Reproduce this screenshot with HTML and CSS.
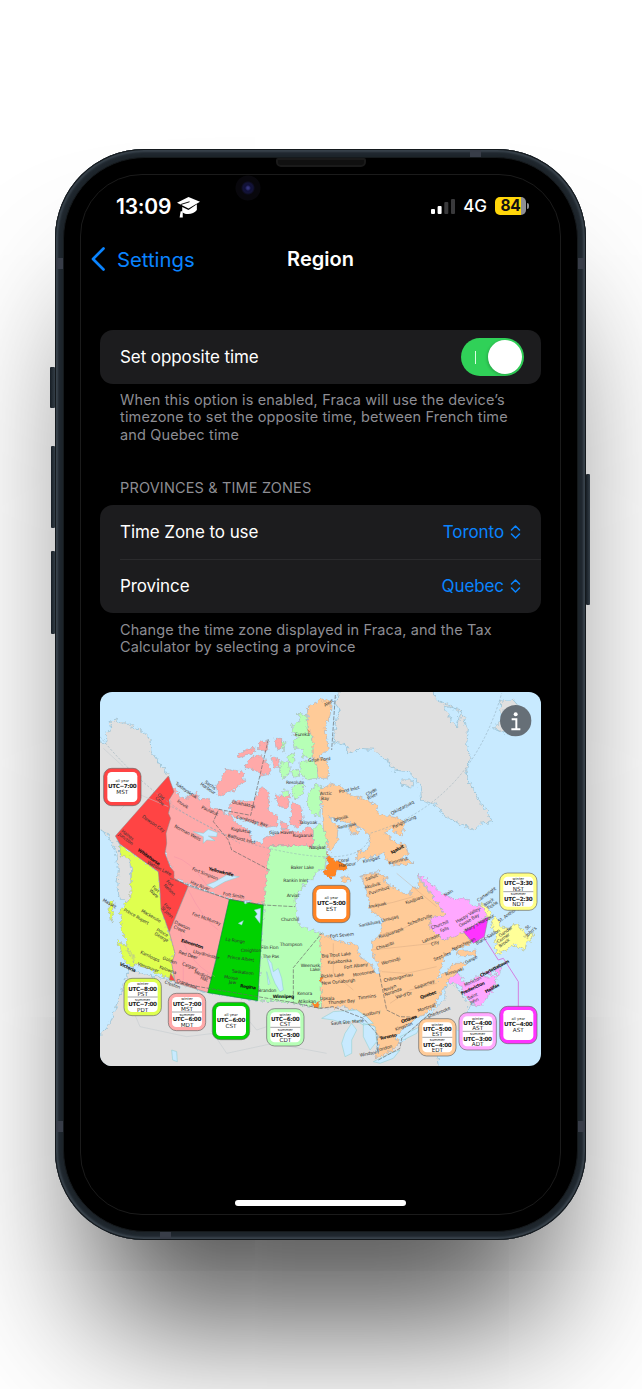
FILE: index.html
```html
<!DOCTYPE html>
<html lang="en">
<head>
<meta charset="utf-8">
<meta name="viewport" content="width=device-width, initial-scale=1">
<title>Region</title>
<link rel="stylesheet" href="styles.css">
</head>
<body>
<div class="phone">
  <i class="key key-mute"></i><i class="key key-up"></i><i class="key key-down"></i><i class="key key-power"></i>
  <i class="band band-tl"></i><i class="band band-tr"></i><i class="band band-bl"></i><i class="band band-br"></i><i class="band band-top"></i><i class="band band-bottom"></i>
  <div class="bezel">
    <i class="speaker"></i>
    <i class="camera"></i>
    <main class="screen">
      <header class="status">
        <span class="clock">13:09</span>
        <svg class="cap" viewBox="0 0 22 20"><path d="M0 5.500 11 0l11 4.500-11 6.500Z" fill="#fff"/><path d="M5 9.500v5c4 3 11 2 14-2V7l-8 5.500Z" fill="#fff"/><path d="M12 4.500 4 7V18" fill="none" stroke="#000" stroke-width=".9"/><path d="M3.500 13.500h2v6h-3Z" fill="#fff"/></svg>
        <span class="spacer"></span>
        <svg class="signal" viewBox="0 0 24 16"><rect y="11" width="4" height="5" rx="1" fill="#fff"/><rect x="6.600" y="8" width="4" height="8" rx="1" fill="#fff"/><rect x="13.300" y="4" width="4" height="12" rx="1" fill="#39393b"/><rect x="20" y="1" width="4" height="15" rx="1" fill="#39393b"/></svg>
        <span class="network">4G</span>
        <span class="battery">84</span><i class="nub"></i>
      </header>
      <nav class="nav">
        <a class="back"><svg viewBox="0 0 14 24"><path d="M12.500 1.500 2 12l10.500 10.500" fill="none" stroke="#0a84ff" stroke-width="2.700" stroke-linecap="round" stroke-linejoin="round"/></svg><span>Settings</span></a>
        <h1>Region</h1>
      </nav>
      <section class="card opposite">
        <div class="row"><span class="name">Set opposite time</span><span class="toggle"><i class="tick"></i><i class="knob"></i></span></div>
      </section>
      <p class="note">When this option is enabled, Fraca will use the device’s<br>timezone to set the opposite time, between French time<br>and Quebec time</p>
      <h2>PROVINCES &amp; TIME ZONES</h2>
      <section class="card">
        <div class="row"><span class="name">Time Zone to use</span><span class="value">Toronto</span><svg class="chev" viewBox="0 0 10 14"><path d="M1 5l4-4 4 4M1 9l4 4 4-4"/></svg></div>
        <div class="row ruled"><span class="name">Province</span><span class="value">Quebec</span><svg class="chev" viewBox="0 0 10 14"><path d="M1 5l4-4 4 4M1 9l4 4 4-4"/></svg></div>
      </section>
      <p class="note note-province">Change the time zone displayed in Fraca, and the Tax<br>Calculator by selecting a province</p>
      <svg class="map" viewBox="0 6 1323 1122">
        <defs><filter id="coast" x="-5%" y="-5%" width="110%" height="110%"><feTurbulence type="fractalNoise" baseFrequency=".09" numOctaves="2" seed="4"/><feDisplacementMap in="SourceGraphic" scale="20" xChannelSelector="R" yChannelSelector="G"/></filter></defs>
        <rect width="1323" height="1130" fill="#c8eaff"/>
        <g filter="url(#coast)" stroke="#8dbace" stroke-width="2" fill="#e0e0e0">
          <path d="M-15 135 12 165 22 152 15 130 35 115 30 95 45 88 60 98 85 100 100 112 118 118 135 130 150 150 153 185 175 215 190 235 210 262 50 445 60 462 58 490 90 500 95 620 85 640 60 625 50 590 55 540 45 480 20 430-15 415Z"/>
          <path d="M85 840 210 870 325 908 473 932 580 938 665 955 720 945 790 980 830 1010 830 1090 900 1060 980 980 1035 925 1035 890 1065 880 1090 925 1115 945 1095 970 1080 1020 1010 1060 1020 1150H-15V1050L30 1000 70 890Z"/>
          <path d="M725-10 705 40 720 60 710 90 700 155 740 165 740 195 780 175 820 178 850 205 870 215 880 240 925 245 945 265 960 285 965 330 1010 345 1030 375 1085 405 1120 420 1140 400 1178 395 1160 365 1140 340 1120 300 1105 270 1100 240 1110 200 1100 165 1105 120 1085 70 1050 45 1010 30 990-10ZM905 270 940 270 935 292 905 285ZM1030 45 1085 60 1070 110 1050 85ZM1200 30 1240 30 1265 60 1260 120 1215 130 1180 115 1205 90Z"/>
        </g>
        <g filter="url(#coast)" stroke="#a3a7b0" stroke-width="1.500">
          <g fill="#ffa9a9">
            <path d="M348 290 372 250 378 235 425 245 435 275 400 300 355 318ZM410 195 440 178 465 175 460 192 420 202ZM478 160 505 152 503 180 475 182ZM450 205 475 195 505 215 512 252 485 258 465 240 435 232ZM525 145 545 145 548 170 532 178ZM388 345 400 330 450 335 470 320 475 298 490 290 508 310 505 360 535 380 530 408 500 412 440 392 390 375ZM525 315 570 315 567 345 555 358 535 345ZM575 335 605 350 610 385 592 415 570 398ZM512 200 535 205 540 230 520 235ZM540 395 565 402 560 420 545 418Z"/>
            <path d="M217 290 240 320 260 325 290 305 300 330 325 325 330 350 358 360 390 375 405 395 450 425 455 455 490 460 495 440 535 432 555 415 600 430 620 410 641 415V468H510L497 645 388 628 222 565 190 460Z"/>
          </g>
          <g fill="#b6ffb6">
            <path d="M620 75 595 70 600 95 580 100 575 130 600 140 580 155 585 175 610 175 605 200 640 205V150L625 115ZM600 215 650 210 650 265 615 270 600 245ZM545 215 565 220 570 250 550 265 538 240ZM545 155 555 155 552 190ZM563 195 580 190 582 220 565 215ZM572 240 592 235 600 258 580 262ZM580 285 610 280 612 310 585 330 575 305ZM548 300 565 300 565 320 550 320ZM625 310 645 285 665 290 660 380 640 375 622 345ZM640 420 660 400 682 440 672 520 640 500Z"/>
            <path d="M510 467 682 470 675 535 650 545 640 565 612 585 585 630 590 680 600 705 625 718 665 728 675 810 665 955 580 938 473 932 490 645Z"/>
          </g>
          <g fill="#ffcb98">
            <path d="M622 50 660 30 695 30 690 80 675 110 685 180 660 200 685 215 685 265 655 265 640 200 638 140 625 120Z"/>
            <path d="M665 340 660 300 695 280 725 290 740 310 790 325 830 345 835 370 895 385 915 395 905 440 870 415 855 430 890 460 915 460 925 490 905 500 940 520 910 525 865 520 850 490 770 510 775 485 805 480 810 440 780 410 720 390 685 380 715 410 710 460 690 485 675 430ZM750 405 775 410 770 435 750 430ZM785 555 830 545 865 565 840 580ZM725 560 745 555 750 570 730 580Z"/>
            <path d="M660 730 720 755 770 762 780 800 815 825 825 848 840 850 838 830 825 810 815 780 815 755 840 735 850 690 810 660 805 620 785 560 815 550 840 550 860 580 910 610 930 615 935 590 960 595 952 555 1035 675 990 685 990 715 1030 750 1090 725 1120 760 1060 780 1035 800 1010 870 1035 850 1060 820 1100 820 1040 880 1000 950 980 970 950 985 910 1015 885 1040 900 1060 870 1085 825 1105 835 1080 835 1040 820 1010 780 990 765 960 730 950 665 955ZM1070 785 1130 780 1125 795 1075 798Z"/>
          </g>
          <path fill="#ffff98" stroke="#a4aa80" d="M1145 640 1175 670 1165 690 1140 655ZM1180 680 1192 680 1200 710 1225 715 1250 700 1265 720 1285 735 1275 780 1240 765 1220 780 1190 795 1185 760 1190 730 1175 710ZM1275 740 1300 725 1290 755Z"/>
          <path fill="#ffa8ff" d="M952 550 990 580 1025 610 1070 630 1100 625 1120 650 1145 645 1163 680 1090 725 1060 740 1030 750 990 715 990 685 1035 675ZM1045 865 1075 850 1095 880 1120 870 1140 855 1165 865 1190 855 1180 900 1155 930 1140 950 1115 940 1090 910 1085 885 1050 880ZM1145 850 1170 840 1175 855ZM1180 840 1205 830 1195 860Z"/>
          <path fill="#dfff50" d="M60 462 175 545 180 600 195 690 215 750 225 790 215 820 222 872 105 820 85 785 80 750 62 720 65 690 60 660 92 625 95 530 90 505 60 497ZM50 748 75 765 100 800 108 830 85 825 65 795ZM28 635 42 635 40 670 32 697 27 665Z"/>
          <path fill="#ff8424" d="M680 488 700 510 725 515 745 540 710 540 705 560 690 565 672 550 682 520ZM660 860 670 860 665 885ZM635 945 660 932 655 958ZM622 118 630 118 628 135Z"/>
        </g>
        <g stroke="#888" stroke-width="1.500">
          <path fill="#ff4444" d="M205 258 222 305 207 330 210 350 205 370 212 385 198 430 200 460 195 490 210 530 222 545V565L265 588 208 727 195 690 183 660 180 600 175 545 60 462 46 438ZM212 850 225 872 208 870Z"/>
          <path fill="#ffa9a9" d="M265 588 388 628 325 908 226 878 215 820 225 790 208 727Z"/>
          <path fill="#00d200" stroke="#174" d="M388 628 490 645 473 932 323 908 348 810 350 795Z"/>
          <path fill="#ff33ff" d="M1090 725 1165 680 1153 740 1120 760Z"/>
        </g>
        <g fill="#c8eaff" stroke="#8cc" stroke-width="1.500">
          <path d="M280 425 310 430 325 418 352 428 350 440 325 438 345 452 320 450 310 460 310 440ZM320 585 345 575 380 555 418 560 375 575 340 595ZM463 660 482 655 480 700 465 680 472 672ZM430 632 455 632 435 642ZM415 700 430 692 425 705ZM500 800 515 820 520 845 535 835 545 865 550 900 540 905 525 880 515 855ZM500 845 510 880 505 885ZM665 985 700 965 770 960 800 980 820 1000 790 1005 765 990 730 1000 700 990ZM735 1030 755 1000 770 1020 755 1050 755 1090 735 1100 725 1060ZM790 1000 825 1010 830 1055 810 1080 790 1040ZM215 1080 230 1085 232 1115 218 1110ZM820 1115 870 1090 900 1080 880 1105 840 1120ZM900 1040 960 1010 950 1030 910 1050Z"/>
        </g>
        <g fill="none" stroke="#666" stroke-width="2">
          <path stroke-dasharray="12 4" d="M505 148 452 376 356 358 340 395 385 450 395 480 505 538M210 565 388 628 490 645 585 650M225 878 580 938V833L665 730M706 15 695 180M580 938 660 955 700 950 790 985 830 1030 835 1090M838 850 860 960 900 980 950 982M835 1110 900 1075 905 1045 990 970"/>
          <path stroke="#8ea6b2" stroke-width="1.500" stroke-dasharray="7 5" d="M0 140Q220 410 510 476T810 430Q1110 340 1205 10M215 350 300 395 420 460"/>
          <path stroke="#e8a" stroke-width="1" d="M222 500Q270 510 320 585M265 600Q310 690 355 720M240 720Q255 810 345 860M250 810V870"/>
          <path stroke="#c0c8cc" stroke-width="1.500" d="M60 360 110 310 205 350M10 175 70 230M90 940 120 1010 260 1040 340 1030 380 1090 520 1060 680 1090M420 960 470 1020 560 990"/>
          <path stroke="#c49a78" stroke-width="1" d="M810 650Q880 640 940 620M840 735 910 715 960 690M815 780 1000 760M890 550 1010 650M845 845 920 850 1010 830M870 940 930 900 1010 880M700 760V850L760 900"/>
          <path stroke="#d47fe0" stroke-width="3" d="M1150 740 1195 810 1210 805 1255 875V950"/>
        </g>
        <g class="places">
          <text x="225" y="283" transform="rotate(35 225 283)">Tuktoyaktuk</text><text x="313" y="278" transform="rotate(35 313 278)">Sachs</text><text x="300" y="284" transform="rotate(35 300 284)">Harbour</text><text x="172" y="315" transform="rotate(45 172 315)">Old</text><text x="165" y="325" transform="rotate(45 165 325)">Crow</text><text x="230" y="335" transform="rotate(35 230 335)">Inuvik</text><text x="303" y="355" transform="rotate(25 303 355)">Paulatuk</text><text x="125" y="382" transform="rotate(35 125 382)">Dawson City</text><text x="222" y="412" transform="rotate(28 222 412)">Norman Wells</text><text x="63" y="425" transform="rotate(38 63 425)">Haines</text><text x="55" y="435" transform="rotate(38 55 435)">Junction</text><text class="b" x="112" y="482" transform="rotate(35 112 482)">Whitehorse</text><text x="140" y="520" transform="rotate(28 140 520)">Watson Lake</text><text x="275" y="540" transform="rotate(22 275 540)">Fort Simpson</text><text class="b" x="325" y="540" transform="rotate(15 325 540)">Yellowknife</text><text x="270" y="580" transform="rotate(22 270 580)">Hay River</text><text x="368" y="615" transform="rotate(10 368 615)">Fort Smith</text>
          <text x="395" y="340" transform="rotate(12 395 340)">Ulukhaktok</text><text x="408" y="385" transform="rotate(15 408 385)">Cambridge Bay</text><text x="392" y="420" transform="rotate(10 392 420)">Kugluktuk</text><text x="382" y="440" transform="rotate(15 382 440)">Bathurst Inlet</text><text x="508" y="433">Gjoa Haven</text><text x="578" y="440">Kugaaruk</text><text x="597" y="402">Taloyoak</text><text x="558" y="281">Resolute</text><text x="585" y="137">Eureka</text><text x="625" y="216" transform="rotate(-5 625 216)">Grise Fiord</text><text x="675" y="50" transform="rotate(-30 675 50)">Alert</text><text x="627" y="478">Naujaat</text><text x="572" y="538">Baker Lake</text><text x="550" y="577">Rankin Inlet</text><text x="560" y="621">Arviat</text><text x="543" y="692">Churchill</text>
          <text x="660" y="315">Arctic</text><text x="663" y="329">Bay</text><text x="718" y="310" transform="rotate(-12 718 310)">Pond Inlet</text><text x="800" y="318" transform="rotate(-28 800 318)">Clyde</text><text x="805" y="330" transform="rotate(-28 805 330)">River</text><text x="875" y="375" transform="rotate(-28 875 375)">Qikiqtarjuaq</text><text x="880" y="416" transform="rotate(-25 880 416)">Pangnirtung</text><text x="702" y="393" transform="rotate(-12 702 393)">Igloolik</text><text x="713" y="418" transform="rotate(-12 713 418)">Sanirajak</text><text class="b" x="875" y="492" transform="rotate(-28 875 492)">Iqaluit</text><text x="790" y="520" transform="rotate(-15 790 520)">Kinngait</text><text x="868" y="524" transform="rotate(-15 868 524)">Kimmirut</text><text x="715" y="518" transform="rotate(-8 715 518)">Coral</text><text x="717" y="532" transform="rotate(-8 717 532)">Harbour</text>
          <text x="7" y="633" transform="rotate(30 7 633)">Masset</text><text x="155" y="592" transform="rotate(45 155 592)">Fort</text><text x="147" y="602" transform="rotate(45 147 602)">Ware</text><text x="197" y="575" transform="rotate(45 197 575)">Fort</text><text x="190" y="587" transform="rotate(45 190 587)">Nelson</text><text x="190" y="645" transform="rotate(45 190 645)">Fort</text><text x="182" y="655" transform="rotate(45 182 655)">St John</text><text x="70" y="662" transform="rotate(30 70 662)">Prince Rupert</text><text x="122" y="665" transform="rotate(30 122 665)">Mackenzie</text><text x="168" y="722" transform="rotate(30 168 722)">Prince</text><text x="162" y="734" transform="rotate(30 162 734)">George</text><text x="222" y="700" transform="rotate(25 222 700)">Dawson</text><text x="220" y="714" transform="rotate(25 220 714)">Creek</text><text x="275" y="675" transform="rotate(20 275 675)">Fort McMurray</text><text x="120" y="790" transform="rotate(25 120 790)">Kamloops</text><text x="112" y="825" transform="rotate(20 112 825)">Vancouver</text><text class="b" x="58" y="825" transform="rotate(25 58 825)">Victoria</text><text x="187" y="808" transform="rotate(20 187 808)">Golden</text><text x="177" y="835" transform="rotate(20 177 835)">Kelowna</text><text x="193" y="880" transform="rotate(20 193 880)">Creston</text><text x="228" y="875" transform="rotate(20 228 875)">Cranbrook</text><text class="b" x="242" y="755" transform="rotate(18 242 755)">Edmonton</text><text x="235" y="790" transform="rotate(18 235 790)">Red Deer</text><text x="278" y="788" transform="rotate(15 278 788)">Lloydminster</text><text x="245" y="825" transform="rotate(20 245 825)">Calgary</text><text x="282" y="850" transform="rotate(20 282 850)">Medicine</text><text x="300" y="867" transform="rotate(20 300 867)">Hat</text>
          <text x="376" y="752" transform="rotate(8 376 752)">La Ronge</text><text x="422" y="785">Creighton</text><text x="382" y="805" transform="rotate(7 382 805)">Prince Albert</text><text x="395" y="847" transform="rotate(7 395 847)">Saskatoon</text><text x="372" y="865" transform="rotate(7 372 865)">Moose</text><text x="386" y="880" transform="rotate(7 386 880)">Jaw</text><text class="b" x="420" y="892" transform="rotate(7 420 892)">Regina</text><text x="483" y="777">Flin Flon</text><text x="488" y="805">The Pas</text><text x="540" y="768">Thompson</text><text x="475" y="907">Brandon</text><text class="b" x="518" y="925">Winnipeg</text><text x="592" y="914">Kenora</text><text x="594" y="940">Atikokan</text><text x="602" y="832">Weenusk</text><text x="630" y="843">Lake</text>
          <text x="690" y="743" transform="rotate(-5 690 743)">Fort Severn</text><text x="665" y="803" transform="rotate(-5 665 803)">Big Trout Lake</text><text x="683" y="822" transform="rotate(-5 683 822)">Kasabonika</text><text x="733" y="837" transform="rotate(-8 733 837)">Fort Albany</text><text x="760" y="860" transform="rotate(-10 760 860)">Moosonee</text><text x="663" y="864" transform="rotate(-5 663 864)">Pickle Lake</text><text x="665" y="884" transform="rotate(-5 665 884)">New Osnaburgh</text><text x="660" y="929">Upsala</text><text x="685" y="943" transform="rotate(-5 685 943)">Thunder Bay</text><text x="775" y="929" transform="rotate(-8 775 929)">Timmins</text><text x="693" y="1005" transform="rotate(-5 693 1005)">Sault Ste. Marie</text><text x="790" y="980" transform="rotate(-12 790 980)">Sudbury</text><text class="b" x="840" y="1050" transform="rotate(-12 840 1050)">Toronto</text><text x="832" y="1085" transform="rotate(-15 832 1085)">London</text><text x="780" y="1100" transform="rotate(-10 780 1100)">Windsor</text><text x="887" y="1023" transform="rotate(-20 887 1023)">Kingston</text><text class="b" x="905" y="1000" transform="rotate(-20 905 1000)">Ottawa</text><text x="955" y="967" transform="rotate(-20 955 967)">Montreal</text><text x="985" y="985" transform="rotate(-22 985 985)">Sherbrooke</text><text class="b" x="962" y="927" transform="rotate(-20 962 927)">Quebec</text>
          <text x="798" y="573" transform="rotate(-20 798 573)">Salluit</text><text x="795" y="597" transform="rotate(-15 795 597)">Akulivik</text><text x="808" y="615" transform="rotate(-18 808 615)">Puvirnituq</text><text x="808" y="655" transform="rotate(-12 808 655)">Inukjuak</text><text x="845" y="697" transform="rotate(-15 845 697)">Umiujaq</text><text x="778" y="712" transform="rotate(-12 778 712)">Sanikiluaq</text><text x="838" y="745" transform="rotate(-18 838 745)">Kuujjuarapik</text><text x="830" y="780" transform="rotate(-18 830 780)">Chisasibi</text><text x="845" y="825" transform="rotate(-15 845 825)">Wemindji</text><text x="852" y="876" transform="rotate(-12 852 876)">Chibougamau</text><text x="852" y="905" transform="rotate(-20 852 905)">Rouyn</text><text x="855" y="919" transform="rotate(-20 855 919)">Noranda</text><text x="888" y="926" transform="rotate(-15 888 926)">Val-d’Or</text><text x="945" y="898" transform="rotate(-20 945 898)">Saguenay</text><text x="918" y="643" transform="rotate(-20 918 643)">Kuujjuaq</text><text x="925" y="707" transform="rotate(-20 925 707)">Schefferville</text><text x="968" y="760" transform="rotate(-22 968 760)">Labrador</text><text x="995" y="768" transform="rotate(-22 995 768)">City</text><text x="1003" y="813" transform="rotate(-22 1003 813)">Sept-Îles</text><text x="1058" y="783" transform="rotate(-25 1058 783)">Natashquan</text><text x="1130" y="765" transform="rotate(-30 1130 765)">Blanc-Sablon</text><text x="1035" y="620" transform="rotate(-30 1035 620)">Nain</text><text x="995" y="718" transform="rotate(-20 995 718)">Churchill</text><text x="1022" y="727" transform="rotate(-20 1022 727)">Falls</text><text x="1070" y="700" transform="rotate(-30 1070 700)">Happy Valley-</text><text x="1080" y="712" transform="rotate(-30 1080 712)">Goose Bay</text><text x="1098" y="726" transform="rotate(-28 1098 726)">Mary’s Harbour</text><text x="1135" y="636" transform="rotate(-35 1135 636)">Cartwright</text><text x="1155" y="650" transform="rotate(-35 1155 650)">Black</text><text x="1165" y="660" transform="rotate(-35 1165 660)">Tickle</text><text x="1198" y="698" transform="rotate(-35 1198 698)">St. Anthony</text><text x="1200" y="742" transform="rotate(-35 1200 742)">Gander</text><text x="1195" y="760" transform="rotate(-35 1195 760)">Corner</text><text x="1200" y="773" transform="rotate(-35 1200 773)">Brook</text><text x="1280" y="720" transform="rotate(-40 1280 720)">St.</text><text x="1282" y="740" transform="rotate(-40 1282 740)">John’s</text><text x="1098" y="822" transform="rotate(-28 1098 822)">Gaspé</text><text x="1037" y="858" transform="rotate(-18 1037 858)">Rimouski</text><text class="b" x="1143" y="862" transform="rotate(-28 1143 862)">Charlottetown</text><text x="1095" y="890" transform="rotate(-25 1095 890)">Moncton</text><text class="b" x="1085" y="915" transform="rotate(-25 1085 915)">Fredericton</text><text class="b" x="1158" y="910" transform="rotate(-28 1158 910)">Halifax</text><text x="1105" y="930" transform="rotate(-25 1105 930)">Saint</text><text x="1112" y="943" transform="rotate(-25 1112 943)">John</text>
        </g>
        <g class="zones">
          <g transform="translate(10 234)" fill="#ff4444"><rect class="ring" x="1" y="1" width="112" height="112" rx="24"/><rect class="face" x="12" y="12" width="90" height="90" rx="13"/><text class="s" x="57" y="42">all year</text><text class="u" x="57" y="60" textLength="86">UTC−7:00</text><text class="z" x="57" y="78">MST</text></g>
          <g transform="translate(637 585)" fill="#ff8424"><rect class="ring" x="1" y="1" width="112" height="112" rx="24"/><rect class="face" x="12" y="12" width="90" height="90" rx="13"/><text class="s" x="57" y="42">all year</text><text class="u" x="57" y="60" textLength="86">UTC−5:00</text><text class="z" x="57" y="78">EST</text></g>
          <g transform="translate(336 936)" fill="#00d200"><rect class="ring" x="1" y="1" width="112" height="112" rx="24"/><rect class="face" x="12" y="12" width="90" height="90" rx="13"/><text class="s" x="57" y="42">all year</text><text class="u" x="57" y="60" textLength="86">UTC−6:00</text><text class="z" x="57" y="78">CST</text></g>
          <g transform="translate(1198 948)" fill="#ff33ff"><rect class="ring" x="1" y="1" width="112" height="112" rx="24"/><rect class="face" x="12" y="12" width="90" height="90" rx="13"/><text class="s" x="57" y="42">all year</text><text class="u" x="57" y="60" textLength="86">UTC−4:00</text><text class="z" x="57" y="78">AST</text></g>
          <g transform="translate(71 864)" fill="#dfff50"><rect class="ring" x="1" y="1" width="112" height="112" rx="24"/><rect class="face" x="12" y="12" width="90" height="90" rx="13"/><text class="s" x="57" y="22">winter</text><text class="u" x="57" y="38" textLength="86">UTC−8:00</text><text class="z" x="57" y="54">PST</text><path d="M12 57h90"/><text class="s" x="57" y="68">summer</text><text class="u" x="57" y="85" textLength="86">UTC−7:00</text><text class="z" x="57" y="101">PDT</text></g>
          <g transform="translate(204 909)" fill="#ffa9a9"><rect class="ring" x="1" y="1" width="112" height="112" rx="24"/><rect class="face" x="12" y="12" width="90" height="90" rx="13"/><text class="s" x="57" y="22">winter</text><text class="u" x="57" y="38" textLength="86">UTC−7:00</text><text class="z" x="57" y="54">MST</text><path d="M12 57h90"/><text class="s" x="57" y="68">summer</text><text class="u" x="57" y="85" textLength="86">UTC−6:00</text><text class="z" x="57" y="101">MDT</text></g>
          <g transform="translate(499 955)" fill="#b6ffb6"><rect class="ring" x="1" y="1" width="112" height="112" rx="24"/><rect class="face" x="12" y="12" width="90" height="90" rx="13"/><text class="s" x="57" y="22">winter</text><text class="u" x="57" y="38" textLength="86">UTC−6:00</text><text class="z" x="57" y="54">CST</text><path d="M12 57h90"/><text class="s" x="57" y="68">summer</text><text class="u" x="57" y="85" textLength="86">UTC−5:00</text><text class="z" x="57" y="101">CDT</text></g>
          <g transform="translate(955 985)" fill="#ffcb98"><rect class="ring" x="1" y="1" width="112" height="112" rx="24"/><rect class="face" x="12" y="12" width="90" height="90" rx="13"/><text class="s" x="57" y="22">winter</text><text class="u" x="57" y="38" textLength="86">UTC−5:00</text><text class="z" x="57" y="54">EST</text><path d="M12 57h90"/><text class="s" x="57" y="68">summer</text><text class="u" x="57" y="85" textLength="86">UTC−4:00</text><text class="z" x="57" y="101">EDT</text></g>
          <g transform="translate(1076 967)" fill="#ffa8ff"><rect class="ring" x="1" y="1" width="112" height="112" rx="24"/><rect class="face" x="12" y="12" width="90" height="90" rx="13"/><text class="s" x="57" y="22">winter</text><text class="u" x="57" y="38" textLength="86">UTC−4:00</text><text class="z" x="57" y="54">AST</text><path d="M12 57h90"/><text class="s" x="57" y="68">summer</text><text class="u" x="57" y="85" textLength="86">UTC−3:00</text><text class="z" x="57" y="101">ADT</text></g>
          <g transform="translate(1198 548)" fill="#ffff86"><rect class="ring" x="1" y="1" width="112" height="112" rx="24"/><rect class="face" x="12" y="12" width="90" height="90" rx="13"/><text class="s" x="57" y="22">winter</text><text class="u" x="57" y="38" textLength="86">UTC−3:30</text><text class="z" x="57" y="54">NST</text><path d="M12 57h90"/><text class="s" x="57" y="68">summer</text><text class="u" x="57" y="85" textLength="86">UTC−2:30</text><text class="z" x="57" y="101">NDT</text></g>
        </g>
        <circle cx="1247" cy="92" r="47" fill="#666f77"/><circle cx="1247" cy="73" r="6" fill="#fff"/><path d="M1235 88H1249V118M1234 118H1261" fill="none" stroke="#fff" stroke-width="6"/>
      </svg>
      <i class="home"></i>
    </main>
  </div>
</div>
</body>
</html>
```
FILE: styles.css
```css
* { box-sizing: border-box; }
body { margin: 0; height: 1389px; padding: 149px 0 0 55px; overflow: hidden; background: #fff; font-family: Inter, "Liberation Sans", sans-serif; color: #fff; }
i { display: block; }
.phone { position: relative; width: 531px; height: 1091px; padding: 8px; border-radius: 89px; background: #1d242a; box-shadow: inset 0 0 0 1px #14191d, inset 0 0 2px 3px #39434c, inset 0 0 2px 6px #20282f, 0 118px 140px -38px rgba(0,0,0,.69); }
.bezel { position: relative; height: 1075px; padding: 17px; border-radius: 82px; background: #000; border: 1px solid #15191c; }
.screen { height: 1041px; margin: -1px; padding: 0 19px; border-radius: 62px; border: 1px solid #1b1b1b; display: flex; flex-direction: column; }
.key { position: absolute; background: linear-gradient(90deg, #161d24, #343e47); border-radius: 1px; width: 4px; left: -4px; }
.key-mute { top: 218px; height: 41px; width: 5px; left: -5px; }
.key-up { top: 297px; height: 82px; }
.key-down { top: 402px; height: 83px; }
.key-power { left: auto; right: -4px; top: 325px; height: 131px; }
.band { position: absolute; width: 7px; height: 11px; background: #383d48; }
.band-tl, .band-bl { left: 1px; }
.band-tr, .band-br { right: 1px; }
.band-tl, .band-tr { top: 109px; }
.band-bl, .band-br { bottom: 108px; }
.band-top, .band-bottom { width: 11px; height: 7px; }
.band-top { top: 1px; right: 105px; }
.band-bottom { bottom: 1px; left: 105px; }
.speaker { position: absolute; left: 212px; top: 0; width: 90px; height: 9px; border: 2px solid #1a1a1a; border-radius: 2px 2px 5px 5px; background: #101010; }
.camera { position: absolute; left: 171px; top: 17px; width: 26px; height: 26px; border-radius: 50%; background: radial-gradient(circle, #34347c 0 1px, #101038 3px, #131338 5px, #08070c 7px, #08070c 12px, #000 13px); }
.status { display: flex; align-items: center; height: 30px; margin: 16px 12px 0 16px; }
.clock { font-size: 21px; font-weight: 600; letter-spacing: -.2px; }
.cap { width: 23px; height: 21px; margin: 3px 0 0 6px; }
.spacer { flex: 1; }
.signal { width: 24px; height: 16px; }
.network { margin: 0 8px; font-size: 17px; font-weight: 500; }
.battery { width: 31px; height: 18px; border-radius: 5px; text-align: center; font-size: 15.500px; line-height: 18px; font-weight: 700; letter-spacing: -.2px; color: #111; background: linear-gradient(90deg, #ffd60a 84%, #8e8e93 84%); }
.nub { width: 2px; height: 6px; margin-left: 1px; background: #8e8e93; border-radius: 0 2px 2px 0; }
.nav { display: grid; grid-template-columns: 1fr auto 1fr; align-items: center; height: 40px; margin: 18px -10px 0; }
.back { display: flex; align-items: center; gap: 12px; color: #0a84ff; font-size: 20.300px; }
.back svg { width: 14px; height: 24px; margin-left: 1px; }
h1 { margin: 0; font-size: 20px; font-weight: 600; }
.card { width: 441px; flex: none; background: #1c1c1e; border-radius: 13px; }
.opposite { margin-top: 51px; }
.row { position: relative; display: flex; align-items: center; height: 54px; padding: 0 20px; font-size: 17px; letter-spacing: -.08px; }
.name { flex: 1; }
.ruled::before { content: ""; position: absolute; left: 20px; right: 0; top: 0; height: 1px; background: #2b2b2d; }
.value { color: #0a84ff; }
.chev { width: 11px; height: 14px; margin-left: 6px; fill: none; stroke: #0a84ff; stroke-width: 1.500; stroke-linecap: round; stroke-linejoin: round; }
.toggle { display: flex; align-items: center; justify-content: space-between; width: 63px; height: 38px; margin-right: -3px; padding: 0 2px 0 14px; border-radius: 19px; background: #30d158; }
.tick { width: 1px; height: 13px; background: #d8ffe2; }
.knob { width: 34px; height: 34px; border-radius: 50%; background: #fff; box-shadow: -1px 1px 3px #0003; }
.note { margin: 7px 20px 0; color: #8d8d93; font-size: 14.500px; line-height: 17.300px; letter-spacing: .14px; white-space: nowrap; }
.note-province { margin-top: 8px; letter-spacing: .1px; }
h2 { margin: 35.500px 20px 6.500px; color: #8d8d93; font-size: 14.500px; line-height: 20px; font-weight: 400; letter-spacing: .16px; }
.map { display: block; flex: none; width: 441px; height: 374px; margin-top: 37px; border-radius: 12px; }
.places { font: 13.500px "DejaVu Sans", sans-serif; fill: #333; letter-spacing: -.5px; }
.places .b { font-weight: 700; fill: #111; letter-spacing: -1px; }
.zones .ring { stroke: #666; stroke-width: 2px; }
.zones .face { fill: #fff; }
.zones text { fill: #222; text-anchor: middle; font-family: "DejaVu Sans", sans-serif; }
.zones .s { font-size: 11px; }
.zones .u { font-size: 17px; font-weight: 700; }
.zones .z { font-size: 17px; }
.zones path { stroke: #777; stroke-width: 2px; }
.home { width: 171px; height: 6px; margin: auto auto 8px; border-radius: 3px; background: #fff; }
```
